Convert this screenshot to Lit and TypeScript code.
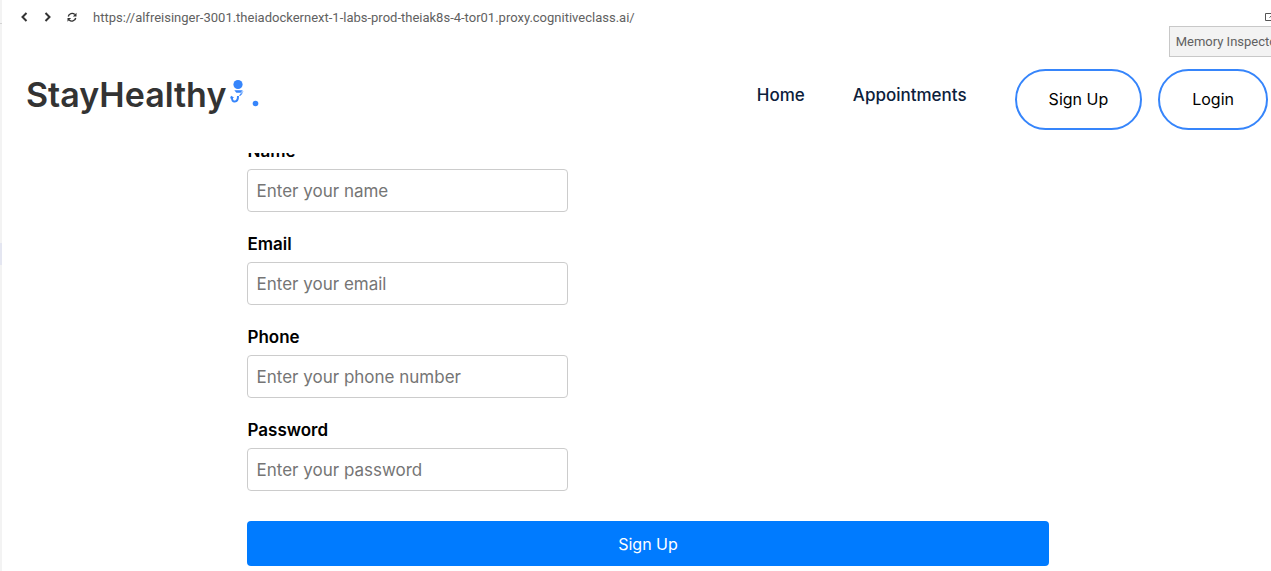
import { LitElement, html, css, svg } from "lit";
import { customElement } from "lit/decorators.js";

interface Field {
  id: string;
  label: string;
  type: string;
  placeholder: string;
}

const FIELDS: Field[] = [
  { id: "name", label: "Name", type: "text", placeholder: "Enter your name" },
  { id: "email", label: "Email", type: "email", placeholder: "Enter your email" },
  { id: "phone", label: "Phone", type: "tel", placeholder: "Enter your phone number" },
  { id: "password", label: "Password", type: "password", placeholder: "Enter your password" },
];

@customElement("browser-bar")
class BrowserBar extends LitElement {
  static styles = css`
    :host {
      display: flex;
      align-items: center;
      height: 34px;
      padding: 0 14px;
      box-sizing: border-box;
      font-family: Roboto, "Noto Sans", sans-serif;
      font-size: 13px;
      color: #616161;
    }
    .tool {
      display: flex;
      width: 16px;
      height: 16px;
      padding: 0;
      margin-right: 8px;
      border: 0;
      background: none;
      color: #333;
    }
    .url {
      flex: 1;
      min-width: 0;
      margin-left: 5px;
      padding: 0;
      border: 0;
      outline: 0;
      background: none;
      font: inherit;
      color: inherit;
    }
    .open {
      margin: 0;
      color: #555;
    }
  `;

  render() {
    const stroke = (d: string) => svg`<path d=${d} fill="none" stroke="currentColor" stroke-width="2" />`;
    return html`
      <button class="tool" aria-label="Back">
        <svg width="16" height="16" viewBox="0 0 16 16">${stroke("M10.5 4 L6.5 8 L10.5 12")}</svg>
      </button>
      <button class="tool" aria-label="Forward">
        <svg width="16" height="16" viewBox="0 0 16 16">${stroke("M5.5 4 L9.5 8 L5.5 12")}</svg>
      </button>
      <button class="tool" aria-label="Reload">
        <svg width="16" height="16" viewBox="0 0 16 16">
          <path d="M4.3 7.5 A3.8 3.8 0 0 1 10.8 5.6 M11.7 9 A3.8 3.8 0 0 1 5.2 10.9" fill="none" stroke="currentColor" stroke-width="1.4" />
          <path d="M12.5 3.8 V7.4 H8.9 Z M3.5 12.7 V9.1 H7.1 Z" fill="currentColor" />
        </svg>
      </button>
      <input class="url" aria-label="Address" value="https://alfreisinger-3001.theiadockernext-1-labs-prod-theiak8s-4-tor01.proxy.cognitiveclass.ai/" />
      <button class="tool open" aria-label="Open in a new window">
        <svg width="16" height="16" viewBox="0 0 16 16">
          <path d="M8 4.5 H1.5 V11.5 H10.5 V8 M5.5 8.5 L12 3 M9 3 H12 V6" fill="none" stroke="currentColor" />
        </svg>
      </button>
    `;
  }
}

@customElement("site-header")
class SiteHeader extends LitElement {
  static styles = css`
    :host {
      display: flex;
      justify-content: space-between;
      align-items: flex-start;
      padding: 35px 26px 23px 24px;
      background: #fff;
    }
    .logo {
      display: flex;
      align-items: center;
      margin-top: 2px;
      font-size: 34px;
      font-weight: 600;
      line-height: 48px;
      color: #333;
      text-decoration: none;
    }
    .mark {
      display: block;
    }
    .nav {
      display: flex;
      gap: 48px;
    }
    .link {
      padding-top: 14px;
      font-size: 17px;
      font-weight: 500;
      line-height: 24px;
      color: #0c203b;
      text-decoration: none;
    }
    .actions {
      display: flex;
      gap: 16px;
    }
    .pill {
      padding: 16px 32px;
      border: 2px solid #3685fb;
      border-radius: 32px;
      background: #fff;
      color: #000;
      font-family: inherit;
      font-size: 16px;
      line-height: 25px;
    }
  `;

  render() {
    return html`
      <a class="logo" href="#">
        <span>StayHealthy</span>
        <svg class="mark" width="34" height="32" viewBox="1 0 34 32" fill="#3685fb" aria-hidden="true">
          <circle cx="13" cy="5.5" r="4.6" />
          <path d="M9.3 11.2 H17.8 L15.6 13.8 H11.4 Z" />
          <path d="M17.8 12.5 L14.5 16.5 M17 14.5 L15 16.8" fill="none" stroke="#3685fb" />
          <path d="M7 18 C6.2 24.6 13.2 24 13 17" fill="none" stroke="#3685fb" stroke-width="2" />
          <path d="M5 19.5 L6 16.8 L9.2 18.6 Z" />
          <circle cx="30.5" cy="24.5" r="2.8" />
        </svg>
      </a>
      <nav class="nav">
        <a class="link" href="#">Home</a>
        <a class="link" href="#">Appointments</a>
        <div class="actions">
          <button class="pill">Sign Up</button>
          <button class="pill">Login</button>
        </div>
      </nav>
    `;
  }
}

@customElement("signup-form")
class SignupForm extends LitElement {
  static styles = css`
    :host {
      display: block;
      overflow: hidden;
    }
    .form {
      display: flex;
      flex-direction: column;
      gap: 20px;
      width: 62%;
      margin: -14px auto 0;
    }
    .field {
      display: flex;
      flex-direction: column;
      align-items: flex-start;
      gap: 6px;
    }
    .label {
      font-size: 17px;
      font-weight: 600;
      line-height: 24px;
      color: #000;
    }
    .input {
      width: 40%;
      height: 43px;
      padding: 8px;
      box-sizing: border-box;
      border: 1px solid #ccc;
      border-radius: 4px;
      font: inherit;
      color: #000;
    }
    .input::placeholder {
      color: #757575;
    }
    .submit {
      height: 45px;
      margin-top: 10px;
      padding: 0;
      border: 0;
      border-radius: 4px;
      background: #007bff;
      color: #fff;
      font-family: inherit;
      font-size: 16px;
    }
  `;

  render() {
    return html`
      <form class="form" @submit=${(e: Event) => e.preventDefault()}>
        ${FIELDS.map(
          (f) => html`
            <div class="field">
              <label class="label" for=${f.id}>${f.label}</label>
              <input class="input" id=${f.id} type=${f.type} placeholder=${f.placeholder} />
            </div>
          `
        )}
        <button class="submit" type="submit">Sign Up</button>
      </form>
    `;
  }
}

@customElement("app-root")
class AppRoot extends LitElement {
  static styles = css`
    :host {
      display: flex;
      position: relative;
      height: 100vh;
      overflow: hidden;
      background: #fff;
    }
    .edge {
      display: flex;
      flex-direction: column;
      flex: none;
      width: 2px;
      background: #f3f3f3;
    }
    .tabline {
      height: 1px;
      margin-top: 23px;
      background: #d4d4d4;
    }
    .selected {
      height: 22px;
      margin-top: 219px;
      background: #e4e6f1;
    }
    .panel {
      flex: none;
      display: grid;
      grid-template-rows: auto auto 1fr;
      width: calc(100% + 21px);
      font-family: Inter, sans-serif;
      font-size: 17px;
    }
    .tooltip {
      position: absolute;
      top: 26px;
      right: -17px;
      padding: 5px 6px;
      border: 1px solid #c8c8c8;
      background: #f3f3f3;
      font-family: Roboto, "Noto Sans", sans-serif;
      font-size: 13px;
      line-height: 19px;
      color: #616161;
      white-space: nowrap;
    }
  `;

  render() {
    return html`
      <div class="edge">
        <div class="tabline"></div>
        <div class="selected"></div>
      </div>
      <main class="panel">
        <browser-bar></browser-bar>
        <site-header></site-header>
        <signup-form></signup-form>
      </main>
      <div class="tooltip" role="tooltip">Memory Inspector</div>
    `;
  }
}
